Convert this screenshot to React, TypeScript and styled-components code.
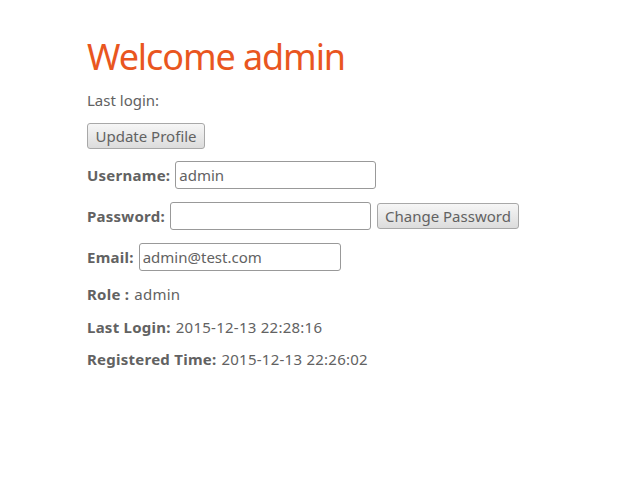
import React from "react";
import styled, { createGlobalStyle } from "styled-components";

const Global = createGlobalStyle`
  html, body { margin: 0; padding: 0; background: #fff; }
  body { font-family: "Noto Sans", "DejaVu Sans", sans-serif; color: #626262; font-size: 15px; }
`;

const Page = styled.div`
  padding: 37px 0 0 87px;
  display: flex;
  flex-direction: column;
  align-items: flex-start;
  gap: 13px;
`;

const Title = styled.h1`
  margin: 0;
  font-size: 36px;
  letter-spacing: -1.1px;
  font-weight: 400;
  line-height: 40px;
  color: #e9561f;
`;

const TextLine = styled.div<{ $pull?: boolean }>`
  height: 20px;
  line-height: 20px;
  display: flex;
  align-items: center;
  gap: 5px;
  margin-top: ${(p) => (p.$pull ? -1 : 0)}px;
`;

const FieldRow = styled.div<{ $pull?: boolean }>`
  height: 28px;
  display: flex;
  align-items: center;
  gap: 5px;
  margin-top: ${(p) => (p.$pull ? -1 : 0)}px;
`;

const Label = styled.b`
  font-weight: 700;
  letter-spacing: 0.25px;
`;

const Value = styled.span`
  letter-spacing: 0.25px;
`;

const Input = styled.input<{ $w: number }>`
  box-sizing: border-box;
  width: ${(p) => p.$w}px;
  height: 28px;
  border: 1px solid #999;
  border-radius: 3px;
  padding: 0 3px;
  font-family: inherit;
  font-size: 15px;
  color: #626262;
  background: #fff;
  outline: none;
`;

const Button = styled.button<{ $w: number; $gap?: number }>`
  box-sizing: border-box;
  width: ${(p) => p.$w}px;
  height: 26px;
  padding: 0;
  border: 1px solid #a8a8a8;
  border-radius: 3px;
  background: linear-gradient(#f6f6f6, #dcdcdc);
  font-family: inherit;
  font-size: 15px;
  color: #626262;
  margin-left: ${(p) => p.$gap ?? 0}px;
`;

export default function App() {
  return (
    <>
      <Global />
      <Page>
        <Title>Welcome admin</Title>
        <TextLine>Last login:</TextLine>
        <Button $w={118}>Update Profile</Button>
        <FieldRow $pull>
          <Label>Username:</Label>
          <Input $w={201} defaultValue="admin" />
        </FieldRow>
        <FieldRow>
          <Label>Password:</Label>
          <Input $w={201} type="password" defaultValue="" />
          <Button $w={142} $gap={1}>Change Password</Button>
        </FieldRow>
        <FieldRow>
          <Label>Email:</Label>
          <Input $w={202} defaultValue="admin@test.com" />
        </FieldRow>
        <TextLine>
          <Label>Role :</Label> <Value>admin</Value>
        </TextLine>
        <TextLine>
          <Label>Last Login:</Label> <Value>2015-12-13 22:28:16</Value>
        </TextLine>
        <TextLine $pull>
          <Label>Registered Time:</Label> <Value>2015-12-13 22:26:02</Value>
        </TextLine>
      </Page>
    </>
  );
}
